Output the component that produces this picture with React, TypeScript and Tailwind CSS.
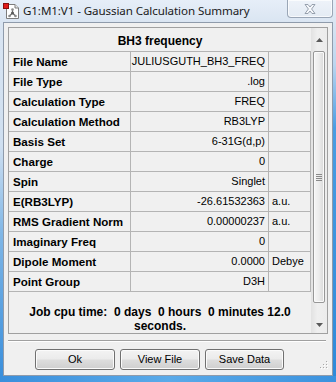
import React from "react";

const rows: [string, string, string][] = [
  ["File Name", "JULIUSGUTH_BH3_FREQ", ""],
  ["File Type", ".log", ""],
  ["Calculation Type", "FREQ", ""],
  ["Calculation Method", "RB3LYP", ""],
  ["Basis Set", "6-31G(d,p)", ""],
  ["Charge", "0", ""],
  ["Spin", "Singlet", ""],
  ["E(RB3LYP)", "-26.61532363", "a.u."],
  ["RMS Gradient Norm", "0.00000237", "a.u."],
  ["Imaginary Freq", "0", ""],
  ["Dipole Moment", "0.0000", "Debye"],
  ["Point Group", "D3H", ""],
];

function AppIcon() {
  return (
    <svg width="17" height="16" viewBox="0 0 17 16">
      <path d="M3.5 1.5 H12 L15.5 5 V15.5 H3.5 Z" fill="#ffffff" stroke="#7d7d7d" />
      <path d="M12 1.5 V5 H15.5" fill="#e8e8e8" stroke="#7d7d7d" />
      <line x1="9.5" y1="6.5" x2="9.5" y2="10" stroke="#6d6d6d" strokeWidth="1.2" />
      <line x1="9.5" y1="10" x2="6.5" y2="13" stroke="#6d6d6d" strokeWidth="1.2" />
      <line x1="9.5" y1="10" x2="12.5" y2="13" stroke="#6d6d6d" strokeWidth="1.2" />
      <circle cx="9.5" cy="6.5" r="1.3" fill="#8a8a8a" />
      <circle cx="6.5" cy="13" r="1.3" fill="#8a8a8a" />
      <circle cx="12.5" cy="13" r="1.3" fill="#8a8a8a" />
      <circle cx="9.5" cy="10" r="1.5" fill="#5a5a5a" />
      <rect x="0.5" y="0.5" width="5" height="5" fill="#e21b1b" stroke="#8a1010" />
    </svg>
  );
}

function CloseGlyph() {
  return (
    <svg width="12" height="10" viewBox="0 0 12 10">
      <path
        d="M1 0.5 H4 L6 3 L8 0.5 H11 L7.6 5 L11 9.5 H8 L6 7 L4 9.5 H1 L4.4 5 Z"
        fill="#f7f9fc"
        stroke="#8d97a5"
        strokeWidth="0.9"
        strokeLinejoin="round"
      />
    </svg>
  );
}

function Arrow({ up }: { up: boolean }) {
  return (
    <svg width="7" height="4" viewBox="0 0 7 4">
      {up ? <polygon points="3.5,0 7,4 0,4" fill="#5a5a5a" /> : <polygon points="0,0 7,0 3.5,4" fill="#5a5a5a" />}
    </svg>
  );
}

function Grip() {
  const dots: [number, number][] = [
    [8, 0],
    [8, 3],
    [5, 3],
    [8, 6],
    [5, 6],
    [2, 6],
  ];
  return (
    <svg width="10" height="9" viewBox="0 0 10 9">
      {dots.map(([x, y], i) => (
        <g key={i}>
          <rect x={x + 1} y={y + 1} width="1" height="1" fill="#ffffff" />
          <rect x={x} y={y} width="1" height="1" fill="#a8a8a8" />
        </g>
      ))}
    </svg>
  );
}

function Btn({ label, w }: { label: string; w: string }) {
  return (
    <div
      className={`${w} h-[21px] flex items-center justify-center rounded-[3px] border border-[#707070] bg-[linear-gradient(180deg,#f3f3f3_0%,#ebebeb_48%,#dddddd_52%,#cfcfcf_100%)] shadow-[inset_0_0_0_1px_#fbfbfb] text-[11px] text-black`}
    >
      {label}
    </div>
  );
}

export default function App() {
  return (
    <div className="w-[336px] h-[382px] flex flex-col overflow-hidden bg-[#dde7f3] font-['Liberation_Sans',Arial,sans-serif] text-black">
      {/* title bar */}
      <div className="h-[22px] flex items-start bg-[linear-gradient(180deg,#e6eef8_0%,#dae5f2_100%)]">
        <div className="ml-[3px] mt-[3px]">
          <AppIcon />
        </div>
        <div className="ml-[3px] mt-[3px] text-[11.6px] leading-[16px] text-[#1a1a1a] font-['Noto_Sans',sans-serif] tracking-[-0.1px]">
          G1:M1:V1 - Gaussian Calculation Summary
        </div>
        <div className="ml-auto mr-[3px] w-[46px] h-[18px] flex items-center justify-center rounded-b-[4px] border border-t-0 border-[#9aa6b6] bg-[linear-gradient(180deg,#eef3f9_0%,#e4ebf4_100%)] shadow-[inset_0_0_0_1px_rgba(255,255,255,0.7)]">
          <CloseGlyph />
        </div>
      </div>

      {/* middle */}
      <div className="flex-1 flex">
        <div className="w-[3px] bg-[linear-gradient(180deg,#dae5f2_0%,#cfdff0_35%,#7fb6e6_60%,#3a8fdc_100%)]" />
        <div className="flex-1 flex flex-col border border-[#8f9bab] bg-[#f0f0f0]">
          <div className="pt-[4px] pl-[4px] pr-[4px]">
            {/* panel */}
            <div className="h-[307px] flex border border-[#a0a0a0] bg-[#f0f0f0]">
              <div className="w-[302px] flex flex-col overflow-hidden">
                <div className="h-[24px] pt-[3px] flex items-center justify-center border-b border-[#b4b4b4] text-[12px] font-bold">
                  BH3 frequency
                </div>
                {rows.map(([label, value, unit]) => (
                  <div key={label} className="h-[20px] flex border-b border-[#b4b4b4]">
                    <div className="w-[122px] pl-[4px] flex items-center border-r border-[#b4b4b4] text-[11.6px] font-bold whitespace-nowrap">
                      {label}
                    </div>
                    <div className="w-[138px] pr-[3px] flex items-center justify-end border-r border-[#b4b4b4] text-[11px] whitespace-nowrap">
                      {value}
                    </div>
                    <div className="w-[42px] pl-[3px] flex items-center border-r border-[#b4b4b4] text-[11px] whitespace-nowrap">
                      {unit}
                    </div>
                  </div>
                ))}
                <div className="pt-[14px] text-center text-[12px] font-bold leading-[13.5px] whitespace-pre">
                  {"Job cpu time:  0 days  0 hours  0 minutes 12.0\nseconds."}
                </div>
              </div>
              {/* scrollbar */}
              <div className="w-[16px] flex flex-col bg-[linear-gradient(90deg,#e2e2e2_0%,#efefef_40%,#ececec_100%)]">
                <div className="h-[23px] flex items-center justify-center">
                  <Arrow up />
                </div>
                <div className="h-[252px] mx-[2px] rounded-[2px] border border-[#979797] bg-[linear-gradient(90deg,#f6f6f6_0%,#ececec_50%,#d9d9d9_100%)] shadow-[inset_0_0_0_1px_#fafafa] flex flex-col items-center justify-center gap-[1px]">
                  <div className="w-[6px] h-[1px] bg-[#8a8a8a]" />
                  <div className="w-[6px] h-[1px] bg-[#8a8a8a]" />
                  <div className="w-[6px] h-[1px] bg-[#8a8a8a]" />
                  <div className="w-[6px] h-[1px] bg-[#8a8a8a]" />
                </div>
                <div className="flex-1" />
                <div className="h-[17px] flex items-center justify-center">
                  <Arrow up={false} />
                </div>
              </div>
            </div>
          </div>
          {/* separator */}
          <div className="mt-[6px] ml-[4px] w-[318px] h-[2px] border-t border-[#a0a0a0] border-b border-b-white" />
          {/* buttons */}
          <div className="mt-[7px] flex items-start">
            <div className="ml-[31px] flex gap-[5px]">
              <Btn label="Ok" w="w-[80px]" />
              <Btn label="View File" w="w-[80px]" />
              <Btn label="Save Data" w="w-[79px]" />
            </div>
            <div className="ml-auto mr-[4px] mt-[12px]">
              <Grip />
            </div>
          </div>
        </div>
        <div className="w-[3px] bg-[linear-gradient(180deg,#dae5f2_0%,#bcd6ef_12%,#4a9de2_30%,#2f8ad9_100%)]" />
      </div>
      <div className="h-[6px] bg-[linear-gradient(90deg,#3a8fdc_0%,#5aaae9_50%,#3b92de_100%)]" />
    </div>
  );
}
